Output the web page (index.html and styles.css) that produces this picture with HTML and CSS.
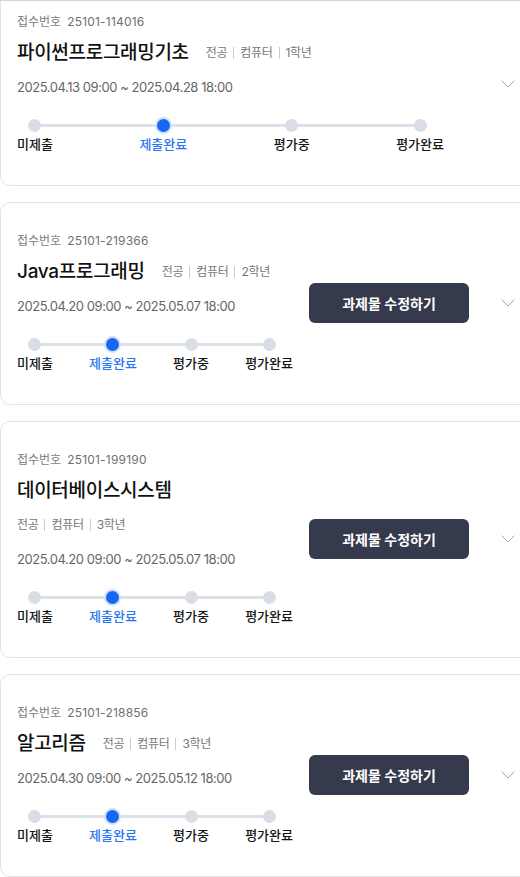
FILE: index.html
```html
<!DOCTYPE html>
<html lang="ko">
<head>
    <meta charset="UTF-8">
    <meta name="viewport" content="width=device-width, initial-scale=1.0">
    <title>과제물 제출 현황</title>
    <link rel="stylesheet" href="styles.css">
</head>
<body>

    <div class="viewport">
        <div class="list">

            <!-- 1 -->
            <div class="card">
                <div class="info info-wide">
                    <div class="receipt"><span class="receipt-label">접수번호</span><span>25101-114016</span></div>
                    <div class="title-row">
                        <h2 class="title">파이썬프로그래밍기초</h2>
                        <div class="meta"><span>전공</span><i></i><span>컴퓨터</span><i></i><span>1학년</span></div>
                    </div>
                    <div class="date">2025.04.13 09:00 ~ 2025.04.28 18:00</div>
                    <ul class="steps">
                        <li>미제출</li>
                        <li class="active">제출완료</li>
                        <li>평가중</li>
                        <li>평가완료</li>
                    </ul>
                </div>
                <svg class="toggle" width="14" height="8" viewBox="0 0 14 8"><path d="M0.5 0.5 L7 7 L13.5 0.5" /></svg>
            </div>

            <!-- 2 -->
            <div class="card">
                <div class="info">
                    <div class="receipt"><span class="receipt-label">접수번호</span><span>25101-219366</span></div>
                    <div class="title-row">
                        <h2 class="title">Java프로그래밍</h2>
                        <div class="meta"><span>전공</span><i></i><span>컴퓨터</span><i></i><span>2학년</span></div>
                    </div>
                    <div class="date">2025.04.20 09:00 ~ 2025.05.07 18:00</div>
                    <ul class="steps">
                        <li>미제출</li>
                        <li class="active">제출완료</li>
                        <li>평가중</li>
                        <li>평가완료</li>
                    </ul>
                </div>
                <button class="edit-btn">과제물 수정하기</button>
                <svg class="toggle" width="14" height="8" viewBox="0 0 14 8"><path d="M0.5 0.5 L7 7 L13.5 0.5" /></svg>
            </div>

            <!-- 3 -->
            <div class="card">
                <div class="info">
                    <div class="receipt"><span class="receipt-label">접수번호</span><span>25101-199190</span></div>
                    <div class="title-row">
                        <h2 class="title">데이터베이스시스템</h2>
                        <div class="meta"><span>전공</span><i></i><span>컴퓨터</span><i></i><span>3학년</span></div>
                    </div>
                    <div class="date">2025.04.20 09:00 ~ 2025.05.07 18:00</div>
                    <ul class="steps">
                        <li>미제출</li>
                        <li class="active">제출완료</li>
                        <li>평가중</li>
                        <li>평가완료</li>
                    </ul>
                </div>
                <button class="edit-btn">과제물 수정하기</button>
                <svg class="toggle" width="14" height="8" viewBox="0 0 14 8"><path d="M0.5 0.5 L7 7 L13.5 0.5" /></svg>
            </div>

            <!-- 4 -->
            <div class="card">
                <div class="info">
                    <div class="receipt"><span class="receipt-label">접수번호</span><span>25101-218856</span></div>
                    <div class="title-row">
                        <h2 class="title">알고리즘</h2>
                        <div class="meta"><span>전공</span><i></i><span>컴퓨터</span><i></i><span>3학년</span></div>
                    </div>
                    <div class="date">2025.04.30 09:00 ~ 2025.05.12 18:00</div>
                    <ul class="steps">
                        <li>미제출</li>
                        <li class="active">제출완료</li>
                        <li>평가중</li>
                        <li>평가완료</li>
                    </ul>
                </div>
                <button class="edit-btn">과제물 수정하기</button>
                <svg class="toggle" width="14" height="8" viewBox="0 0 14 8"><path d="M0.5 0.5 L7 7 L13.5 0.5" /></svg>
            </div>

        </div>
    </div>

</body>
</html>
```

FILE: styles.css
```css
body {
    font-family: Inter, "Noto Sans CJK KR", sans-serif;
    margin: 0;
    padding: 0;
    background: #ffffff;
    color: #111111;
}
.viewport {
    height: 877px;
    box-sizing: border-box;
    border-top: 1px solid #d4d4d4;
    overflow: hidden;
}
.list {
    margin-top: -18px;
    margin-right: -20px;
    display: flex;
    flex-direction: column;
    gap: 16px;
}
.card {
    display: flex;
    align-items: center;
    border: 1px solid #e3e3e3;
    border-radius: 10px;
    padding: 30px 24px 32px 16px;
}
.info {
    width: 276px;
    flex: none;
}
.info-wide {
    width: 427px;
}
.receipt {
    font-size: 12px;
    line-height: 16px;
    color: #6f6f6f;
    display: flex;
    gap: 6px;
}
.receipt span:last-child {
    letter-spacing: 0.2px;
}
.receipt-label {
    color: #7d7d7d;
}
.title-row {
    margin-top: 10px;
    display: flex;
    flex-wrap: wrap;
    align-items: center;
    column-gap: 17px;
    row-gap: 8px;
}
.title {
    margin: 0;
    font-size: 19px;
    line-height: 26px;
    font-weight: 500;
    letter-spacing: -0.3px;
    color: #111111;
}
.meta {
    display: flex;
    align-items: center;
    font-size: 12px;
    line-height: 26px;
    color: #777777;
    letter-spacing: -0.3px;
}
.meta i {
    width: 1px;
    height: 12px;
    background: #cccccc;
    margin: 0 6px;
}
.date {
    margin-top: 12px;
    font-size: 13px;
    line-height: 18px;
    color: #666666;
    letter-spacing: -0.45px;
}
.steps {
    list-style: none;
    margin: 23px 0 0;
    padding: 0;
    display: flex;
    justify-content: space-between;
    position: relative;
}
/* line behind the dots */
.steps::before {
    content: "";
    position: absolute;
    top: 5px;
    left: 17px;
    right: 24px;
    height: 3px;
    background: #dde1ea;
}
.steps li {
    display: flex;
    flex-direction: column;
    align-items: center;
    gap: 3px;
    font-size: 13px;
    line-height: 18px;
    font-weight: 500;
    color: #151515;
    position: relative;
}
.steps li::before {
    content: "";
    width: 13px;
    height: 13px;
    border-radius: 50%;
    background: #d9dde6;
}
.steps li.active {
    color: #2a76f3;
}
.steps li.active::before {
    background: #1668f2;
    box-shadow: 0 0 0 2px #cfe0fd;
}
.edit-btn {
    margin-left: 16px;
    width: 160px;
    height: 40px;
    border: none;
    border-radius: 6px;
    background: #353b4c;
    color: #ffffff;
    font-family: inherit;
    font-size: 14px;
    font-weight: 600;
    cursor: pointer;
}
.toggle {
    margin-left: auto;
    fill: none;
    stroke: #a8a8a8;
    stroke-width: 1;
}
```
